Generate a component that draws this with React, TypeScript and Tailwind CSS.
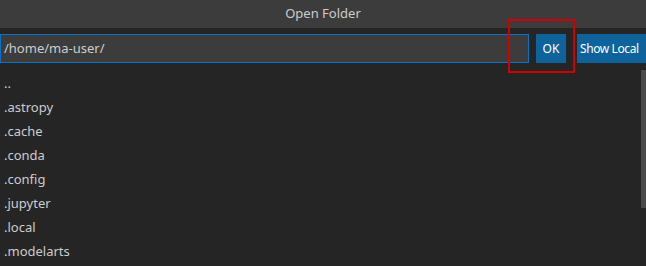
import React from "react";

const items = ["..", ".astropy", ".cache", ".conda", ".config", ".jupyter", ".local", ".modelarts"];

export default function App() {
  return (
    <div
      className="relative w-[646px] h-[266px] overflow-hidden bg-[#252526] text-[#cccccc]"
      style={{ fontFamily: '"Segoe UI", "Noto Sans", "Open Sans", sans-serif' }}
    >
      <div className="h-[28px] bg-[#3c3c3c] flex items-center justify-center text-[13px] text-[#cccccc]">
        Open Folder
      </div>
      <div className="mt-[6px] flex items-center h-[29px]">
        <div className="w-[529px] h-[29px] shrink-0 bg-[#3c3c3c] border border-[#0e72c4] flex items-center pl-[3px] text-[13px] text-[#cccccc]">
          /home/ma-user/
        </div>
        <div className="ml-[7px] w-[30px] h-[29px] shrink-0 bg-[#0e639c] text-white text-[12px] flex items-center justify-center">
          OK
        </div>
        <div className="ml-[11px] w-[72px] h-[29px] shrink-0 bg-[#0e639c] text-white text-[12px] tracking-[-0.4px] flex items-center pl-[3px] whitespace-nowrap">
          Show Local
        </div>
      </div>
      <div className="relative mt-[9px]">
        {items.map((it) => (
          <div key={it} className="h-[24px] flex items-center pl-[4px] text-[13px] text-[#cccccc]">
            {it}
          </div>
        ))}
        <div className="absolute right-0 top-[-2px] w-[5px] h-[138px] bg-[#4a4a4a]" />
      </div>
      <div className="absolute left-[508px] top-[19px] w-[67px] h-[54px] border-2 border-[#d40000]" />
    </div>
  );
}
